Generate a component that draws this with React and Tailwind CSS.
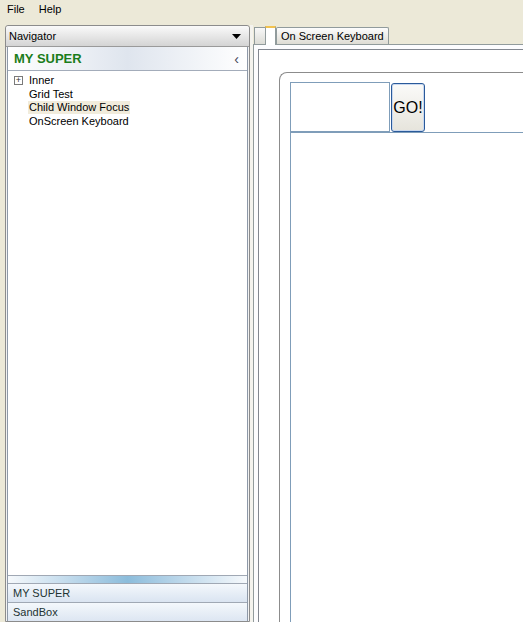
import { useState } from "react";

const font = { fontFamily: "Tahoma, 'Liberation Sans', Arial, sans-serif" };

function TreeItem({ label, expandable, selected }) {
  return (
    <div className="flex items-center h-[13.5px] pl-[6px]">
      <div className="w-[14px] flex items-center">
        {expandable && (
          <div className="w-[9px] h-[9px] border border-[#7a7a7a] bg-white flex items-center justify-center text-[9px] leading-none text-[#333]">
            +
          </div>
        )}
      </div>
      <span
        className={`px-[1px] leading-[13px] ${selected ? "bg-[#f1ecdc]" : ""}`}
      >
        {label}
      </span>
    </div>
  );
}

export default function App() {
  const [selected] = useState("Child Window Focus");
  const items = [
    { label: "Inner", expandable: true },
    { label: "Grid Test" },
    { label: "Child Window Focus" },
    { label: "OnScreen Keyboard" },
  ];

  return (
    <div
      className="w-[523px] h-[622px] bg-[#ece9d8] flex flex-col overflow-hidden text-[11px] text-black"
      style={font}
    >
      {/* menu bar */}
      <div className="h-[18px] flex items-center gap-[14px] px-[7px] shrink-0">
        <span>File</span>
        <span>Help</span>
      </div>

      <div className="flex-1 flex pt-[7px] pl-[5px] min-h-0">
        {/* navigator */}
        <div className="w-[245px] border border-[#8c8c8c] rounded-t-[3px] flex flex-col bg-[#f2f2f2] shrink-0">
          <div className="h-[21px] bg-linear-to-b from-[#fafafa] to-[#d4d4d4] border-b border-[#9a9a9a] flex items-center justify-between px-[3px] rounded-t-[3px]">
            <span>Navigator</span>
            <svg width="9" height="5" viewBox="0 0 9 5" className="mr-[5px]">
              <path d="M0 0 H9 L4.5 5 Z" fill="#000" />
            </svg>
          </div>
          <div className="flex-1 flex flex-col mx-[1px] border-x border-[#8e99a8] bg-white min-h-0">
            <div className="h-[24px] border-b border-[#a3acba] flex items-center justify-between pl-[6px] pr-[8px] bg-linear-to-r from-white via-[#dfe5ee] to-white">
              <span className="font-bold text-[13px] text-[#1b7d1b]">MY SUPER</span>
              <span className="text-[#445] text-[14px] leading-none">‹</span>
            </div>
            <div className="flex-1 pt-[3px] border-b border-[#a0a8b4]">
              {items.map((it) => (
                <TreeItem
                  key={it.label}
                  label={it.label}
                  expandable={it.expandable}
                  selected={it.label === selected}
                />
              ))}
            </div>
            <div className="h-[7px] bg-linear-to-r from-[#f2f6fa] via-[#5aa0cc] to-[#f2f6fa] opacity-70" />
            <div className="h-[19px] border-t border-[#a0a8b4] bg-linear-to-b from-[#f4f8fc] to-[#dae4f1] flex items-center px-[5px] text-[#233]">
              MY SUPER
            </div>
            <div className="h-[19px] border-t border-[#a0a8b4] bg-linear-to-b from-[#f4f8fc] to-[#dde6f2] flex items-center px-[5px] text-[#233]">
              SandBox
            </div>
          </div>
        </div>

        {/* splitter */}
        <div className="w-[3px] bg-[#f4f3ee] shrink-0" />

        {/* document area */}
        <div className="flex-1 flex flex-col min-w-0">
          <div className="h-[19px] flex items-end shrink-0 pl-[1px]">
            <div className="h-[17px] w-[11px] bg-linear-to-b from-[#f8f8f8] to-[#dcdcd6] border-l border-t border-[#919b9c]" />
            <div className="h-[19px] w-[11px] bg-white border-x border-t-2 border-[#919b9c] border-t-[#f2c24f] -mb-[1px] relative z-10" />
            <div className="h-[17px] px-[4px] bg-linear-to-b from-[#fdfdfd] to-[#dedcd4] border border-b-0 border-[#919b9c] rounded-t-[2px] flex items-center">
              On Screen Keyboard
            </div>
          </div>
          <div className="flex-1 border-l border-t border-[#919b9c] bg-[#fcfcfe] pl-[4px] pt-[4px] min-h-0 flex">
            <div className="flex-1 border-l border-t border-[#828790] bg-white pl-[20px] pt-[22px] flex">
              <div className="flex-1 border-l border-t border-[#8c8c8c] rounded-tl-[8px] pl-[10px] pt-[9px] flex flex-col">
                <div className="flex items-stretch h-[50px]">
                  <div className="w-[100px] border border-[#7f9db9] bg-white" />
                  <button className="ml-[1px] mt-[1px] w-[34px] h-[49px] rounded-[3px] border border-[#2a5a9a] bg-linear-to-b from-[#fbfbf9] to-[#e6e4dc] text-[16px] flex items-center justify-center shadow-[inset_0_0_0_1px_#c9d8ef]">
                    GO!
                  </button>
                </div>
                <div className="flex-1 border-l border-t border-[#7f9db9]" />
              </div>
            </div>
          </div>
        </div>
      </div>
    </div>
  );
}
